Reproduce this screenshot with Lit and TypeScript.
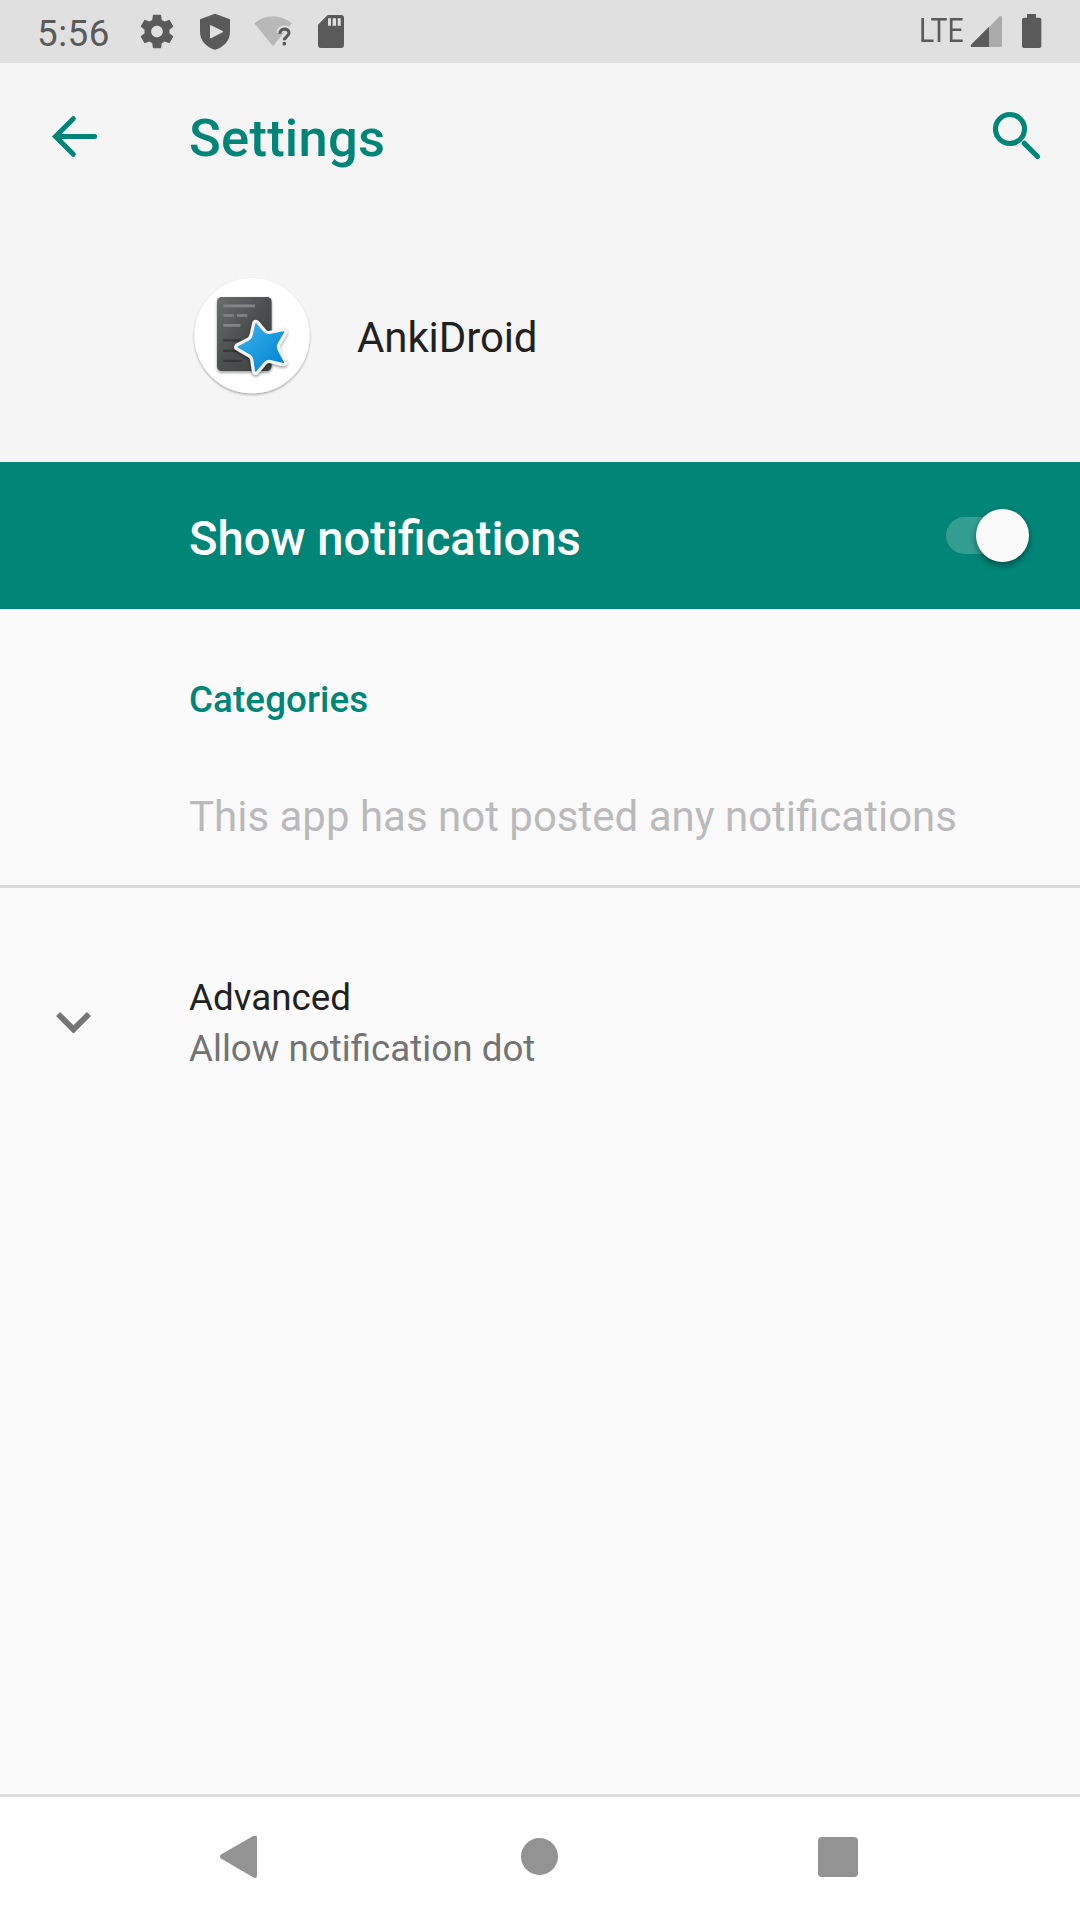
import { LitElement, html, css, svg } from "lit";
import { customElement, property, state } from "lit/decorators.js";

@customElement("status-bar")
class StatusBar extends LitElement {
  @property() time = "5:56";

  static styles = css`
    :host { display: flex; box-sizing: border-box; height: 63px; padding: 12px 36px 0 37px; background: #e0e0e0; color: #5a5a5a; }
    .clock { width: 100px; font-size: 36.75px; line-height: 43px; letter-spacing: 0.5px; }
    .icons { display: flex; gap: 18px; }
    .right { display: flex; margin-left: auto; }
    .net { width: 50px; font-size: 32.3px; line-height: 38px; transform: scaleX(0.88); transform-origin: 0 0; white-space: nowrap; }
    .battery { margin-left: 16px; }
    svg { display: block; fill: currentColor; }
    .faint { fill: #b8b8b8; }
    .dim { fill: #aaaaaa; }
    .hole { fill: #e0e0e0; }
  `;

  render() {
    return html`
      <div class="clock">${this.time}</div>
      <div class="icons">
        <svg width="40" height="40" viewBox="411 36 120 120">
          <path transform="translate(411 34.5) scale(5)" d="M19.43 12.98c.04-.32.07-.64.07-.98s-.03-.66-.07-.98l2.11-1.65c.19-.15.24-.42.12-.64l-2-3.46c-.12-.22-.39-.3-.61-.22l-2.49 1c-.52-.4-1.08-.73-1.69-.98l-.38-2.65C14.46 2.18 14.25 2 14 2h-4c-.25 0-.46.18-.49.42l-.38 2.65c-.61.25-1.17.59-1.69.98l-2.49-1c-.23-.09-.49 0-.61.22l-2 3.46c-.13.22-.07.49.12.64l2.11 1.65c-.04.32-.07.65-.07.98s.03.66.07.98l-2.11 1.65c-.19.15-.24.42-.12.64l2 3.46c.12.22.39.3.61.22l2.49-1c.52.4 1.08.73 1.69.98l.38 2.65c.03.24.24.42.49.42h4c.25 0 .46-.18.49-.42l.38-2.65c.61-.25 1.17-.59 1.69-.98l2.49 1c.23.09.49 0 .61-.22l2-3.46c.12-.22.07-.49-.12-.64l-2.11-1.65zM12 15.5c-1.93 0-3.5-1.57-3.5-3.5s1.57-3.5 3.5-3.5 3.5 1.57 3.5 3.5-1.57 3.5-3.5 3.5z"/>
        </svg>
        <svg width="40" height="40" viewBox="585 36 120 120">
          <path d="M645 41L690 58V95C690 121 671 142 645 149C619 142 600 121 600 95V58Z"/>
          <path class="hole" d="M630 77Q630 74 633 75.500L668 93Q671 95 668 97L633 114.500Q630 116 630 113Z"/>
        </svg>
        <svg width="40" height="40" viewBox="759 36 120 120">
          <path class="faint" d="M763 70Q788 49 819 49T875 70L819 139Z"/>
          <path fill="none" stroke="#e0e0e0" stroke-width="19" d="M839 99C839 82 867 82 867 98C867 109 853 109 853 123V138"/>
          <path fill="none" stroke="#5a5a5a" stroke-width="9.500" d="M839.500 101C839.500 83 867 83 867 99C867 109 853 110 853 121"/>
          <circle cx="853" cy="131" r="5.500"/>
        </svg>
        <svg width="40" height="40" viewBox="933 36 120 120">
          <path fill-rule="evenodd" d="M983 45H1023Q1032 45 1032 54V135Q1032 144 1023 144H963Q954 144 954 135V74ZM984 55V77H993V55ZM998 55V77H1008V55ZM1013 55V77H1022V55Z"/>
        </svg>
      </div>
      <div class="right">
        <div class="net">LTE</div>
        <svg width="35" height="40" viewBox="207 36 105 120">
          <path class="dim" d="M267 82L299 49Q306 45 306 53V136Q306 141 301 141H267Z"/>
          <path d="M267 80V141H217Q210 141 213 134Z"/>
        </svg>
        <svg class="battery" width="24" height="40" viewBox="360 36 72 120">
          <path d="M381 42H408V53H418Q424 53 424 59V138Q424 144 418 144H372Q366 144 366 138V59Q366 53 372 53H381Z"/>
        </svg>
      </div>
    `;
  }
}

@customElement("toggle-switch")
class ToggleSwitch extends LitElement {
  static styles = css`
    :host { display: flex; align-items: center; justify-content: flex-end; width: 83px; height: 53px; }
    .track { display: flex; align-items: center; justify-content: flex-end; width: 83px; height: 37px; border-radius: 19px; background: linear-gradient(90deg, #339d92 0 62px, transparent 62px); }
    .thumb { flex: none; width: 53px; height: 53px; border-radius: 50%; background: #fafafa; box-shadow: 0 4px 6px rgba(0, 0, 0, 0.32), 0 0 4px rgba(0, 0, 0, 0.12); }
  `;
  render() {
    return html`<div class="track"><div class="thumb"></div></div>`;
  }
}

const appIcon = svg`
  <defs>
    <linearGradient id="card" x1="0" y1="0" x2="1" y2="1">
      <stop offset="0" stop-color="#6a6e6d"/><stop offset="0.5" stop-color="#4b4f4f"/><stop offset="1" stop-color="#3c4040"/>
    </linearGradient>
    <linearGradient id="star" x1="0" y1="0" x2="1" y2="1">
      <stop offset="0.1" stop-color="#37aee9"/><stop offset="0.9" stop-color="#0487d4"/>
    </linearGradient>
    <filter id="drop" x="-20%" y="-20%" width="140%" height="150%">
      <feDropShadow dx="0" dy="5" stdDeviation="4" flood-color="#000" flood-opacity="0.4"/>
    </filter>
    <filter id="disc" x="-10%" y="-10%" width="120%" height="120%">
      <feDropShadow dx="0" dy="4" stdDeviation="3.500" flood-color="#000" flood-opacity="0.36"/>
    </filter>
  </defs>
  <circle cx="216" cy="227" r="173" fill="#fff" filter="url(#disc)"/>
  <rect x="111" y="111" width="164" height="222" rx="14" fill="url(#card)" filter="url(#drop)"/>
  <path d="M130 137.500H225M130 166.500H161M171 166.500H202M130 196H181" stroke="#838686" stroke-width="8"/>
  <path d="M130 241H185M130 272.500H185M130 302.500H186" stroke="#353938" stroke-width="7"/>
  <g stroke-linejoin="round">
    <path filter="url(#drop)" stroke="#f5f5f5" stroke-width="23" fill="#f5f5f5" d="M174 261L205 245Q217 239 220 226L228 191L248 215Q256 226 268 224L311 216L292 248Q285 260 292 273L310 307L272 298Q259 295 250 306L227 333L222 298Q220 286 208 280Z"/>
    <path fill="url(#star)" stroke="url(#star)" stroke-width="4" d="M174 261L205 245Q217 239 220 226L228 191L248 215Q256 226 268 224L311 216L292 248Q285 260 292 273L310 307L272 298Q259 295 250 306L227 333L222 298Q220 286 208 280Z"/>
  </g>
`;

@customElement("app-root")
class AppRoot extends LitElement {
  @state() private appName = "AnkiDroid";

  static styles = css`
    :host { display: flex; flex-direction: column; width: 1080px; height: 1920px; overflow: hidden; background: #fafafa; color: #212121; font-family: Roboto, "Liberation Sans", sans-serif; font-size: 36.75px; }
    svg { display: block; }
    .header { height: 399px; background: #f5f5f5; }
    .toolbar { display: flex; box-sizing: border-box; height: 147px; padding: 47px 37px 0 50px; color: #008577; }
    .back { margin-top: 3px; }
    .title { margin: -1px auto 0 89px; font-size: 52.5px; font-weight: 500; line-height: 58px; letter-spacing: 0.25px; }
    .app { display: flex; padding: 64px 0 0 190px; }
    .name { margin-left: 43px; font-size: 42px; line-height: 127px; letter-spacing: -0.1px; }
    .banner { display: flex; align-items: center; box-sizing: border-box; height: 147px; padding: 0 51px 0 189px; background: #008577; color: #fff; font-size: 47.25px; font-weight: 500; justify-content: space-between; }
    .banner span { padding-top: 6px; font-size: 47.2px; }
    .categories { box-sizing: border-box; height: 279px; padding: 66px 0 0 189px; border-bottom: 3px solid #dadada; }
    .heading { color: #008577; font-weight: 500; line-height: 50px; letter-spacing: 0.1px; }
    .empty { padding-top: 62px; color: #bababa; font-size: 42px; line-height: 60px; }
    .advanced { display: flex; flex: 1; padding: 84px 0 0 56px; }
    .chevron { margin: 39.500px 98px 0 0; }
    .row { line-height: 51px; }
    .summary { color: #737373; }
    .nav { display: flex; justify-content: space-between; box-sizing: border-box; height: 126px; padding: 39px 222px 0 219px; border-top: 3px solid #dcdcdc; background: #fefefe; }
    .nav svg { fill: #939393; }
  `;

  render() {
    return html`
      <status-bar></status-bar>
      <div class="header">
        <div class="toolbar">
          <svg class="back" width="50" height="47" viewBox="60 69 150 141" fill="none" stroke="currentColor" stroke-width="15" stroke-linecap="round">
            <path d="M130 86L76.500 139.500L130 193M80 139.500H194"/>
          </svg>
          <div class="title">Settings</div>
          <svg width="53" height="50" viewBox="90 60 159 150" fill="none" stroke="currentColor" stroke-width="15.500" stroke-linecap="round">
            <circle cx="150" cy="117" r="43.500"/><path d="M193 160L232.500 199.500"/>
          </svg>
        </div>
        <div class="app">
          <svg width="124" height="124" viewBox="30 42 372 372">${appIcon}</svg>
          <div class="name">${this.appName}</div>
        </div>
      </div>
      <div class="banner"><span>Show notifications</span><toggle-switch></toggle-switch></div>
      <div class="categories">
        <div class="heading">Categories</div>
        <div class="empty">This app has not posted any notifications</div>
      </div>
      <div class="advanced">
        <svg class="chevron" width="35" height="21.600" viewBox="6 8.590 12 7.410" fill="#757575">
          <path d="M16.590 8.590L12 13.170 7.410 8.590 6 10l6 6 6-6z"/>
        </svg>
        <div>
          <div class="row">Advanced</div>
          <div class="row summary">Allow notification dot</div>
        </div>
      </div>
      <div class="nav">
        <svg width="40" height="44" viewBox="0 1 40 44"><path d="M34.500 0.800Q38 -0.500 38 3V40Q38 44 34.500 42.500L2 23.500Q0 21.500 2 19.500Z"/></svg>
        <svg width="40" height="44" viewBox="0 0 40 44"><circle cx="20.500" cy="20.500" r="18.500"/></svg>
        <svg width="40" height="44" viewBox="0 0 40 44"><rect x="0" y="1" width="40" height="40" rx="4"/></svg>
      </div>
    `;
  }
}
